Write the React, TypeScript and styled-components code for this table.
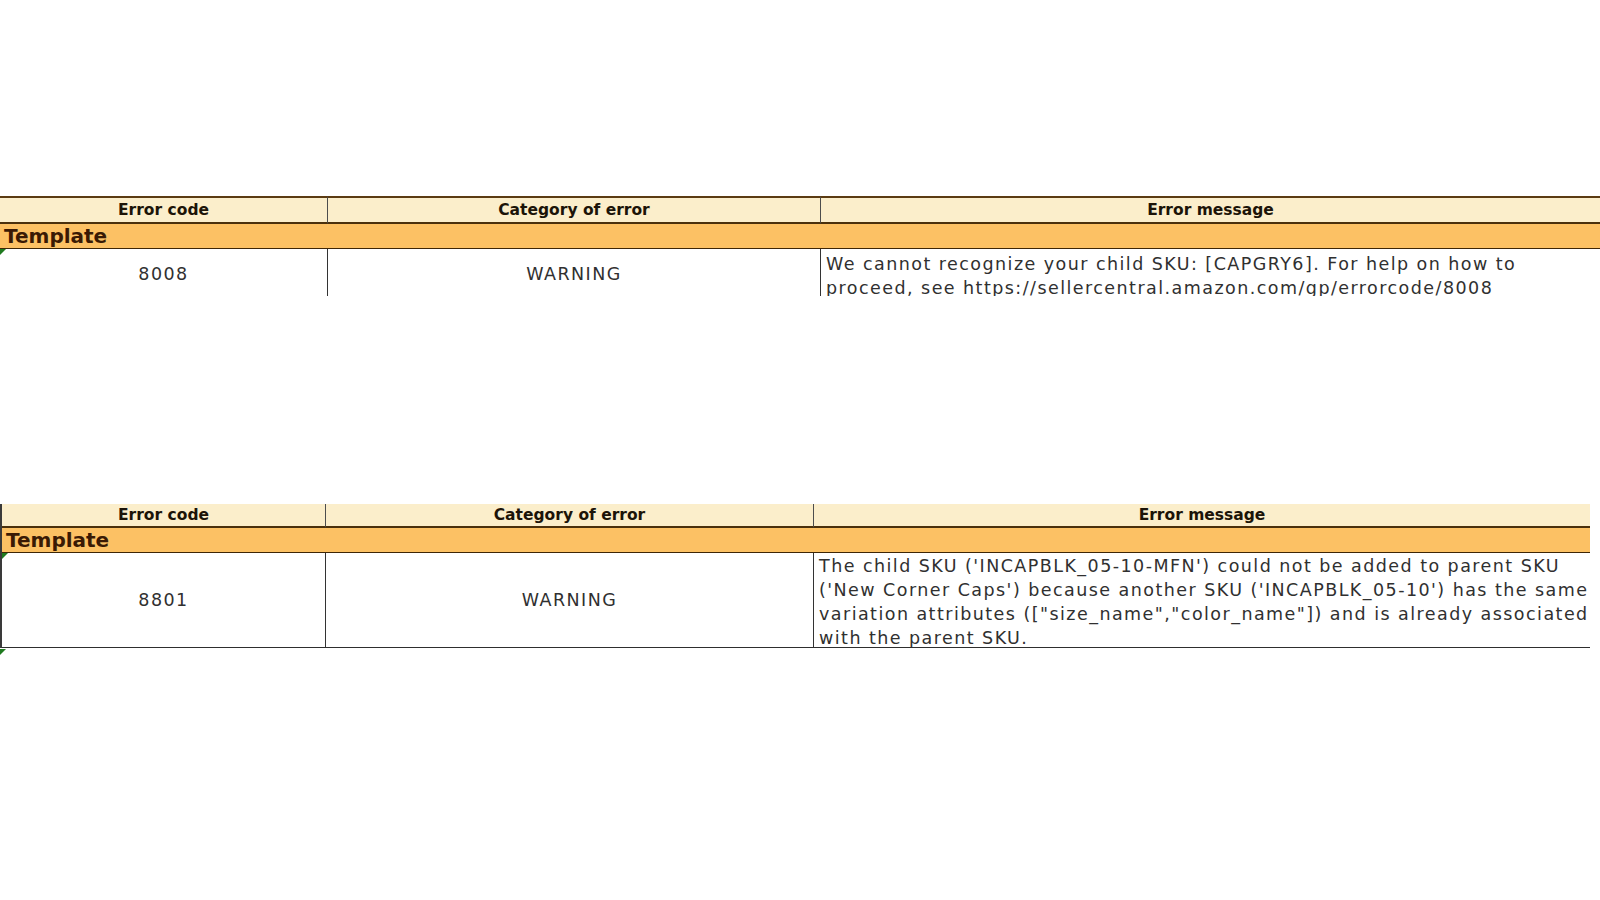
import React from "react";
import styled, { createGlobalStyle } from "styled-components";

const GlobalStyle = createGlobalStyle`
  html, body {
    margin: 0;
    padding: 0;
    background: #ffffff;
  }
  body {
    font-family: "DejaVu Sans", Verdana, sans-serif;
    color: #333333;
  }
`;

const Page = styled.div`
  display: flex;
  flex-direction: column;
  gap: 208px;
  padding-top: 196px;
  width: 1600px;
  height: 900px;
  box-sizing: border-box;
  overflow: hidden;
`;

const Sheet = styled.div<{ $cols: string; $width: number; $edge?: boolean }>`
  display: grid;
  grid-template-columns: ${(p) => p.$cols};
  width: ${(p) => p.$width}px;
  border-left: ${(p) => (p.$edge ? "2px solid #3a3a3a" : "none")};
  box-sizing: border-box;
`;

const HeadCell = styled.div<{ $h: number; $topLine?: boolean; $sep?: boolean }>`
  height: ${(p) => p.$h}px;
  display: flex;
  align-items: center;
  justify-content: center;
  background: #fbeecb;
  border-top: ${(p) => (p.$topLine ? "2px solid #5b3b12" : "none")};
  border-bottom: 2px solid #4a300c;
  border-right: ${(p) => (p.$sep ? "1px solid #4d4d4d" : "none")};
  font-size: 15.5px;
  font-weight: bold;
  color: #1c1408;
`;

const GroupRow = styled.div<{ $h: number }>`
  grid-column: 1 / -1;
  height: ${(p) => p.$h}px;
  display: flex;
  align-items: center;
  padding-left: 4px;
  background: #fcc164;
  border-bottom: 1px solid #3e2606;
  font-size: 20px;
  font-weight: bold;
  color: #3a1a04;
`;

const DataCell = styled.div<{ $h: number; $sep?: boolean; $bottom?: boolean; $text?: boolean; $padTop?: number }>`
  position: relative;
  box-sizing: border-box;
  height: ${(p) => p.$h}px;
  overflow: hidden;
  display: flex;
  align-items: ${(p) => (p.$text ? "flex-start" : "center")};
  justify-content: ${(p) => (p.$text ? "flex-start" : "center")};
  padding: ${(p) => (p.$text ? `${p.$padTop ?? 1}px 0 0 5px` : "0")};
  border-right: ${(p) => (p.$sep ? "1px solid #333333" : "none")};
  border-bottom: ${(p) => (p.$bottom ? "1px solid #2e2e2e" : "none")};
  font-size: 17.5px;
  letter-spacing: 1.45px;
  line-height: 24px;
  color: #303030;
  white-space: nowrap;
`;

const Clip = styled.div<{ $h: number }>`
  grid-column: 1 / -1;
  display: grid;
  grid-template-columns: subgrid;
  height: ${(p) => p.$h}px;
  overflow: hidden;
`;

const Flag = styled.span<{ $bottom?: boolean }>`
  position: absolute;
  left: 0;
  ${(p) => (p.$bottom ? "bottom: -7px;" : "top: 0;")}
  width: 0;
  height: 0;
  border-top: 6px solid #1f7a1f;
  border-right: 6px solid transparent;
`;

const Wrap = styled.div`
  position: relative;
`;

const FirstTable = () => (
  <Sheet $cols="328px 493px 1fr" $width={1600}>
    <HeadCell $h={24} $topLine $sep>Error code</HeadCell>
    <HeadCell $h={24} $topLine $sep>Category of error</HeadCell>
    <HeadCell $h={24} $topLine>Error message</HeadCell>
    <GroupRow $h={24}>Template</GroupRow>
    <Clip $h={47}>
      <DataCell $h={50} $sep>
        <Flag />
        8008
      </DataCell>
      <DataCell $h={50} $sep>WARNING</DataCell>
      <DataCell $h={50} $text $padTop={3}>
        We cannot recognize your child SKU: [CAPGRY6]. For help on how to
        <br />
        proceed, see https://sellercentral.amazon.com/gp/errorcode/8008
      </DataCell>
    </Clip>
  </Sheet>
);

const SecondTable = () => (
  <Wrap>
    <Sheet $cols="324px 488px 1fr" $width={1590} $edge>
      <HeadCell $h={22} $sep>Error code</HeadCell>
      <HeadCell $h={22} $sep>Category of error</HeadCell>
      <HeadCell $h={22}>Error message</HeadCell>
      <GroupRow $h={24}>Template</GroupRow>
      <DataCell $h={95} $sep $bottom>
        <Flag />
        8801
      </DataCell>
      <DataCell $h={95} $sep $bottom>WARNING</DataCell>
      <DataCell $h={95} $bottom $text $padTop={1}>
        The child SKU ('INCAPBLK_05-10-MFN') could not be added to parent SKU
        <br />
        ('New Corner Caps') because another SKU ('INCAPBLK_05-10') has the same
        <br />
        variation attributes (["size_name","color_name"]) and is already associated
        <br />
        with the parent SKU.
      </DataCell>
    </Sheet>
    <Flag $bottom />
  </Wrap>
);

export default function App() {
  return (
    <>
      <GlobalStyle />
      <Page>
        <FirstTable />
        <SecondTable />
      </Page>
    </>
  );
}
